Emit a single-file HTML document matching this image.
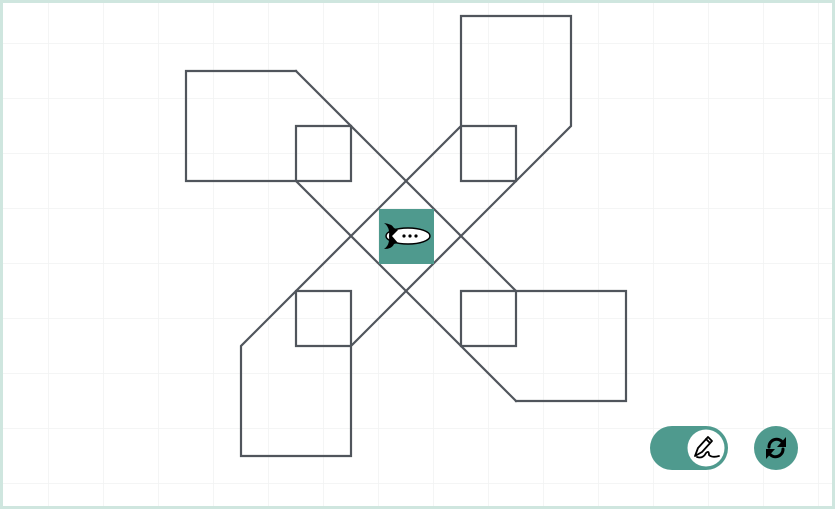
<!DOCTYPE html>
<html><head><style>
html,body{margin:0;padding:0;background:#fff;}
body{width:835px;height:509px;overflow:hidden;position:relative;}
</style></head><body>
<svg width="835" height="509" viewBox="0 0 835 509" style="position:absolute;left:0;top:0">
<defs><pattern id="g" x="-6" y="-11" width="55" height="55" patternUnits="userSpaceOnUse">
<path d="M55 0V55M0 55H55" stroke="#f1f2f2" stroke-width="1.5" fill="none"/></pattern></defs>
<rect x="0" y="0" width="835" height="509" fill="url(#g)"/>
<rect x="1.5" y="1.5" width="832" height="506" fill="none" stroke="#cfe6df" stroke-width="3"/>
<g stroke="#50555c" stroke-width="2.2" fill="none" stroke-linecap="square">
<path d="M296 71H186V181H351V126H296V181"/>
<path d="M296 71L516 291M296 181L516 401"/>
<path d="M461 126V16H571V126L351 346M461 126H516V181H461V126L241 346V456H351V346H296V291H351V456"/>
<path d="M461 291H626V401H516M461 291V346H516V291"/>
</g>
<rect x="379" y="209" width="55" height="55" fill="#4f9a8e"/>
<ellipse cx="408" cy="236" rx="22" ry="8" fill="#fff" stroke="#000" stroke-width="1.5"/>
<path d="M384 223Q392 224 394 228L398 230 392 236 398 243 394 244Q392 249 384 249Q390 245 389 236Q390 227 384 223Z" fill="#000"/>
<circle cx="404" cy="236" r="1.6" fill="#000"/><circle cx="410" cy="236" r="1.6" fill="#000"/><circle cx="416" cy="236" r="1.6" fill="#000"/>
<rect x="650" y="426" width="78" height="44" rx="22" fill="#4f9a8e"/>
<circle cx="706" cy="448" r="18.5" fill="#fff"/>
<g stroke="#000" stroke-width="1.8" fill="none" stroke-linejoin="round" stroke-linecap="round">
<path d="M695 456L698 448 708 437 712 441 702 452Z"/><path d="M706 439L710 443"/>
<path d="M697 457Q703 459 706 453Q709 450 709 455Q712 458 719 456"/>
</g>
<circle cx="776" cy="448" r="22" fill="#4f9a8e"/>
<g stroke="#000" stroke-width="3" fill="none" stroke-linecap="round">
<path d="M769 447A7.5 7.5 0 0 1 783 443"/><path d="M783 449A7.5 7.5 0 0 1 769 453"/>
</g>
<path d="M786 437L786 447 777 447Z" fill="#000"/><path d="M766 459L766 449 775 449Z" fill="#000"/>
</svg>
</body></html>
